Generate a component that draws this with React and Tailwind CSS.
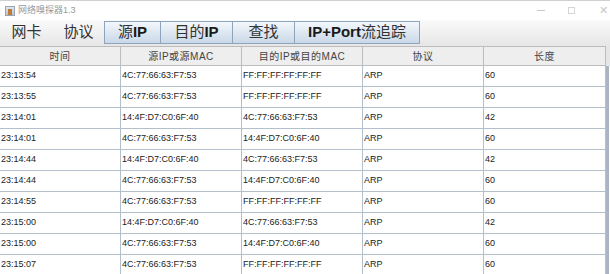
const rows = [
  ['23:13:54', '4C:77:66:63:F7:53', 'FF:FF:FF:FF:FF:FF', 'ARP', '60'],
  ['23:13:55', '4C:77:66:63:F7:53', 'FF:FF:FF:FF:FF:FF', 'ARP', '60'],
  ['23:14:01', '14:4F:D7:C0:6F:40', '4C:77:66:63:F7:53', 'ARP', '42'],
  ['23:14:01', '4C:77:66:63:F7:53', '14:4F:D7:C0:6F:40', 'ARP', '60'],
  ['23:14:44', '14:4F:D7:C0:6F:40', '4C:77:66:63:F7:53', 'ARP', '42'],
  ['23:14:44', '4C:77:66:63:F7:53', '14:4F:D7:C0:6F:40', 'ARP', '60'],
  ['23:14:55', '4C:77:66:63:F7:53', 'FF:FF:FF:FF:FF:FF', 'ARP', '60'],
  ['23:15:00', '14:4F:D7:C0:6F:40', '4C:77:66:63:F7:53', 'ARP', '42'],
  ['23:15:00', '4C:77:66:63:F7:53', '14:4F:D7:C0:6F:40', 'ARP', '60'],
  ['23:15:07', '4C:77:66:63:F7:53', 'FF:FF:FF:FF:FF:FF', 'ARP', '60'],
]

const headers = ['时间', '源IP或源MAC', '目的IP或目的MAC', '协议', '长度']

// latin part is bold, CJK part regular, like the Swing buttons
const buttons = [
  { parts: [['源', false], ['IP', true]], w: 'w-[57px]' },
  { parts: [['目的', false], ['IP', true]], w: 'w-[73px]' },
  { parts: [['查找', false]], w: 'w-[63px]' },
  { parts: [['IP+Port', true], ['流追踪', false]], w: 'w-[126px]' },
]

const cjk = "font-['Liberation_Sans','Noto_Sans_CJK_SC',sans-serif]"

export default function App() {
  return (
    <div className={`w-[610px] h-[274px] overflow-hidden bg-white ${cjk}`}>
      {/* Title bar */}
      <div className="h-[20px] flex items-center border-t border-[#d0d0d0] bg-white">
        <div className="ml-[5px] w-[10px] h-[10px] border border-[#9aa4b0] bg-gradient-to-b from-[#dfe7f0] to-[#b9c6d4] flex items-end justify-center">
          <div className="w-[4px] h-[6px] bg-[#c07a3a]" />
        </div>
        <span className="ml-[3px] text-[9px] text-[#999]">网络嗅探器1.3</span>
        <div className="flex-1" />
        <div className="w-[8px] h-px bg-[#c8c8c8] mr-[23px]" />
        <div className="w-[7px] h-[7px] border border-[#d4d4d4] mr-[24px]" />
        <span className="text-[11px] text-[#c8c8c8] mr-[2px] leading-none">✕</span>
      </div>

      {/* Menu bar */}
      <div className="h-[26px] flex items-stretch bg-gradient-to-b from-[#fafafa] to-[#e6e6e6] pt-px pb-[2px]">
        <div className="w-[53px] flex items-center justify-center text-[15px] text-[#333]">网卡</div>
        <div className="w-[53px] flex items-center justify-center text-[15px] text-[#333] -ml-[1px]">协议</div>
        {buttons.map((b, i) => (
          <div
            key={i}
            className={`${b.w} -ml-px first:ml-0 flex items-center justify-center border border-[#8fa5bf] bg-gradient-to-b from-[#f3f7fb] to-[#c9d8e8] text-[15px] text-[#1a1a1a]`}
          >
            {b.parts.map(([t, bold], k) => (
              <span key={k} className={bold ? 'font-bold' : 'font-normal text-[#333]'}>{t}</span>
            ))}
          </div>
        ))}
      </div>

      {/* Table */}
      <div className="flex">
        <div className="w-[606px]">
          <div className="grid grid-cols-[121px_121px_121px_121px_122px] h-[20px] bg-[#eeeeee] border-y border-[#bdbdbd]">
            {headers.map((h) => (
              <div
                key={h}
                className="flex items-center justify-center text-[10px] text-[#444] border-r border-[#bdbdbd] tracking-[0.5px]"
              >
                {h}
              </div>
            ))}
          </div>
          {rows.map((r, i) => (
            <div
              key={i}
              className="grid grid-cols-[121px_121px_121px_121px_122px] h-[21px] border-b border-[#b4bfcc]"
            >
              {r.map((c, j) => (
                <div
                  key={j}
                  className="flex items-center pl-px text-[9px] text-[#222] border-r border-[#b4bfcc] overflow-hidden whitespace-nowrap"
                >
                  {c}
                </div>
              ))}
            </div>
          ))}
        </div>
        <div className="flex-1 flex flex-col">
          <div className="h-[20px] bg-[#e6e6e6]" />
          <div className="flex-1 bg-[#a9b6c6] w-[3px]" />
        </div>
      </div>
    </div>
  )
}
